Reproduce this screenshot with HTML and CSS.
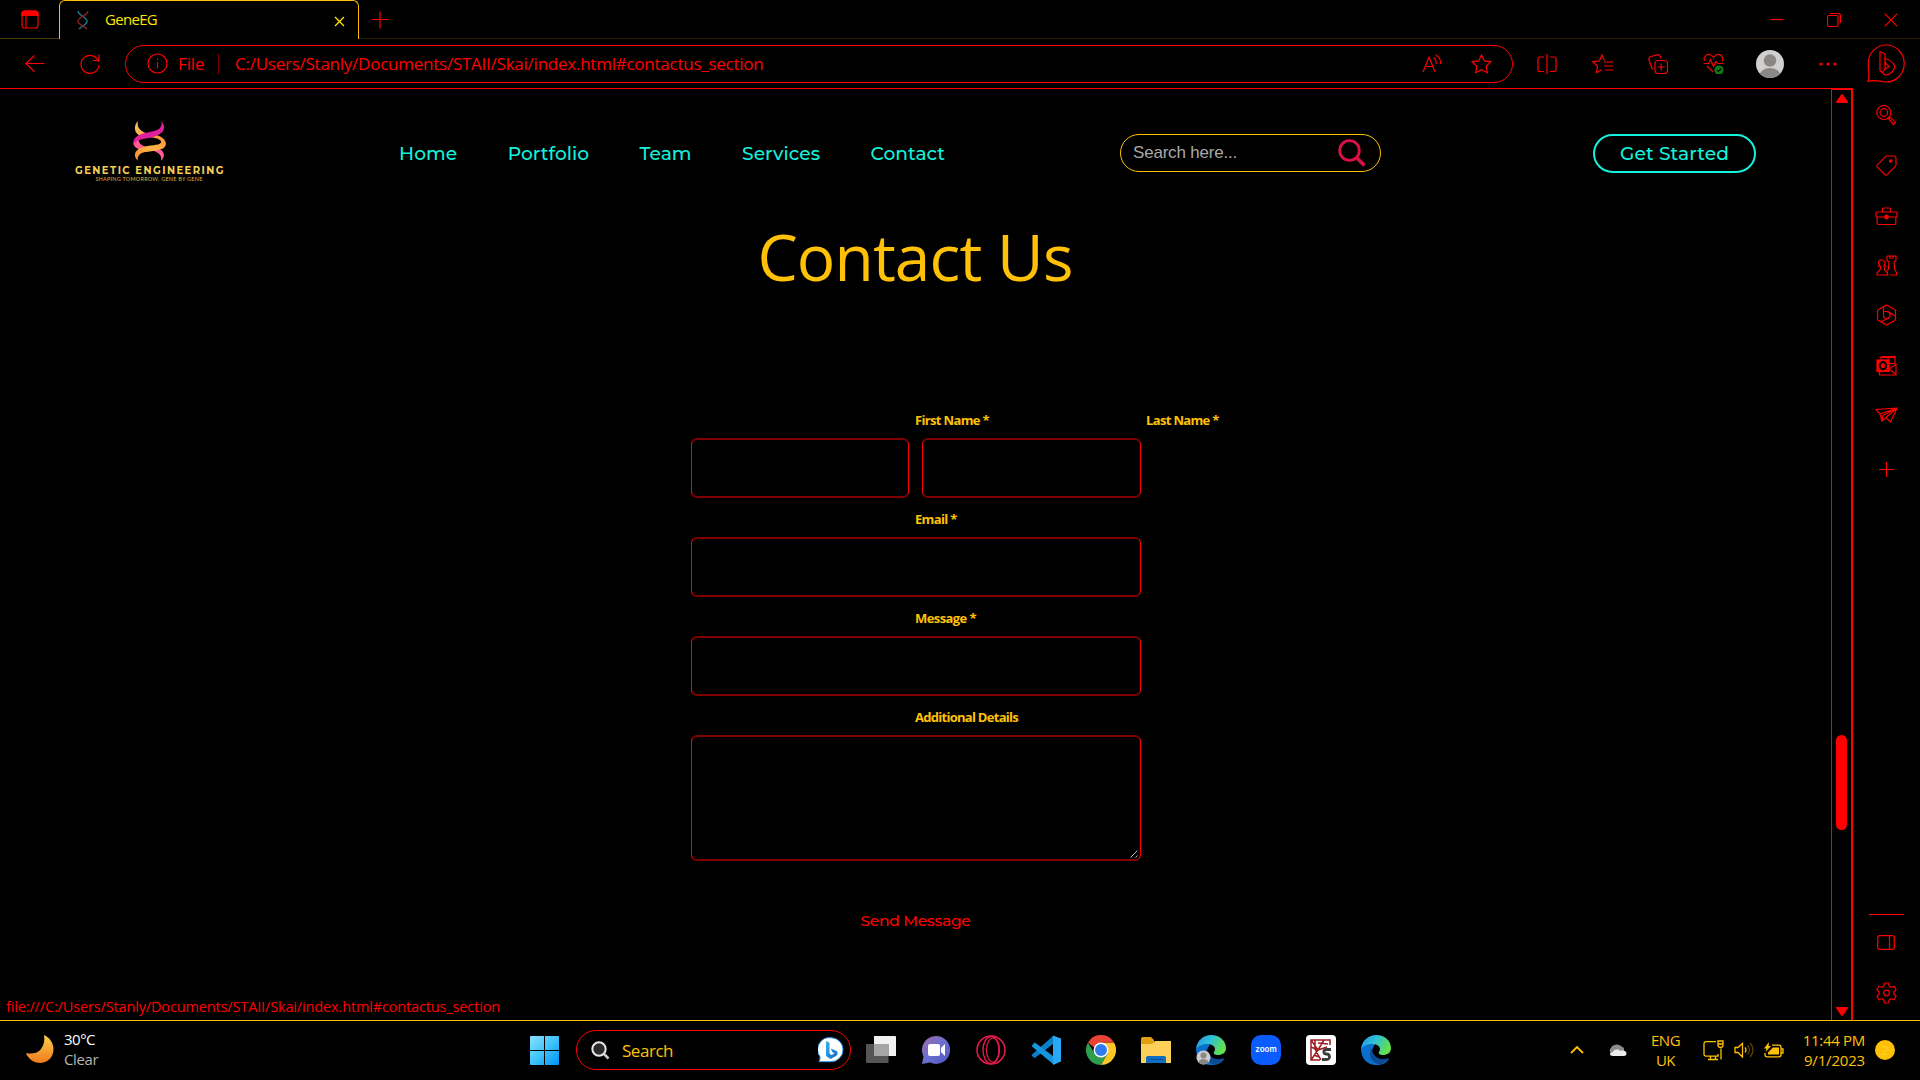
FILE: index.html
```html
<!DOCTYPE html>
<html lang="en">
<head>
<meta charset="utf-8">
<title>GeneEG</title>
<link rel="stylesheet" href="styles.css">
</head>
<body>
<header class="tabstrip">
  <div class="strip-left">
    <svg class="line" width="18" height="20" viewBox="0 0 18 20"><rect x="1" y="1" width="16" height="17" rx="2.5"/><path d="M1 5V3.500A2.500 2.500 0 0 1 3.500 1h11A2.500 2.500 0 0 1 17 3.500V5.500H1z" fill="#f00"/><path d="M5 5v13"/></svg>
  </div>
  <div class="tab">
    <svg class="favicon" width="12" height="20" viewBox="0 0 12 20"><path d="M1 1C2 6 10 7 10 11s-4 4-8 8" stroke="#1b7f8c"/><path d="M11 1C10 6 1 7 1 11s5 4 9 8" stroke="#8c2020"/></svg>
    <span class="tab-title">GeneEG</span>
    <svg class="tab-close" width="11" height="11" viewBox="0 0 11 11"><path d="M1 1l9 9M10 1l-9 9"/></svg>
  </div>
  <div class="strip-right">
    <svg class="line" width="18" height="18" viewBox="0 0 18 18"><path d="M9 .5v17M.5 8.500h17"/></svg>
    <div class="window-buttons">
      <svg class="line" width="14" height="14" viewBox="0 0 14 14"><path d="M.5 6.500h13"/></svg>
      <svg class="line" width="14" height="14" viewBox="0 0 14 14"><rect x=".5" y="2.500" width="10.500" height="11" rx="1.500"/><path d="M3 .5h8a2.500 2.500 0 0 1 2.500 2.500v7"/></svg>
      <svg class="line" width="14" height="14" viewBox="0 0 14 14"><path d="M.7 .7l12.600 12.600M13.300 .7L.7 13.300"/></svg>
    </div>
  </div>
</header>

<div class="toolbar">
  <svg class="line" width="20" height="18" viewBox="0 0 20 18"><path d="M19.500 8.500H1M9.500 .5L1 8.500l8.500 8.200"/></svg>
  <svg class="line reload" width="20" height="20" viewBox="0 0 20 20"><path d="M18.700 8A9 9 0 1 0 19 11M19 .5v6h-6"/></svg>
  <div class="address">
    <svg class="line" width="21" height="21" viewBox="0 0 21 21"><circle cx="10.500" cy="10.500" r="9.500"/><path d="M10.500 9v6.500M10.500 5.500v1.500"/></svg>
    <span class="scheme">File</span>
    <i class="divider"></i>
    <span class="url">C:/Users/Stanly/Documents/STAII/Skai/index.html#contactus_section</span>
    <svg class="line read" width="20" height="19" viewBox="0 0 20 19"><path d="M1 18L7 3l6 15M3.200 12.500h7.600M11.500 3.500c2 1.500 3 4 2.800 6.500M13.500 .8c3.500 2 5.500 5 5.200 9.200"/></svg>
    <svg class="line fav" width="21" height="20" viewBox="0 0 21 20"><path d="M10.500 1l2.900 5.900 6.400.9-4.600 4.500 1.100 6.400-5.800-3-5.800 3 1.100-6.400L1.200 7.800l6.400-.9z"/></svg>
  </div>
  <div class="actions">
    <svg class="line" width="20" height="20" viewBox="0 0 20 20"><path d="M10 0v20M7 3H3a2 2 0 0 0-2 2v10.500a2 2 0 0 0 2 2h4M13 3h4a2 2 0 0 1 2 2v10.500a2 2 0 0 1-2 2h-4"/></svg>
    <svg class="line" width="21" height="20" viewBox="0 0 21 20"><path d="M12.500 6.500L10 1 7.300 6.900l-6.300.9 4.500 4.500-1.100 6.400 5.600-3M12 8h9M12 12h9M13 16h8"/></svg>
    <svg class="line" width="20" height="20" viewBox="0 0 20 20"><rect x="7" y="6.500" width="12.500" height="13" rx="3"/><path d="M13.200 9.500v7M9.800 13h7M4.500 15.500L1 6a3 3 0 0 1 1.800-3.500L9 .8a3 3 0 0 1 3.500 2l.5 1.500"/></svg>
    <svg class="line" width="21" height="21" viewBox="0 0 21 21"><path d="M.5 10.500h5l2-4 3 7 2.500-5 1.500 2H20M1.500 8C0 4 3.500 1 6.500 1.500c2 .3 3 1.500 4 3 1-1.500 2-2.700 4-3C18 1 21 4.500 19 8.500M4 13l6 6"/><circle cx="16" cy="17" r="4" fill="#107c10" stroke="#107c10"/><path d="M14 17l1.500 1.500L18.200 15.500" stroke="#000"/></svg>
    <svg width="28" height="28" viewBox="0 0 28 28"><clipPath id="av"><circle cx="14" cy="14" r="14"/></clipPath><g clip-path="url(#av)"><path fill="#d2d0ce" d="M0 0h28v28H0z"/><circle cx="14" cy="10.500" r="6.200" fill="#8a8886"/><ellipse cx="14" cy="26" rx="10.500" ry="8" fill="#8a8886"/></g></svg>
    <svg width="18" height="4" viewBox="0 0 18 4" fill="#f00"><circle cx="2" cy="2" r="1.600"/><circle cx="9" cy="2" r="1.600"/><circle cx="16" cy="2" r="1.600"/></svg>
    <svg class="line" width="38" height="39" viewBox="0 0 38 39"><path d="M1 37.500C3 32 1.200 28 1.200 19.500A18 18.500 0 1 1 19 38c-7 0-9-3-18-.5z"/><path d="M13 7.500l5 2.500v15l-2.500 3.500-2.500-2zM13 26.500l5 4.500c5 0 9.500-4 9.800-8.500-1-4-4.800-6.500-10-8 0 4 1.500 6.500 4.500 8L18 25" stroke-linejoin="round"/></svg>
  </div>
</div>

<div class="browser-body">
  <main class="viewport">
    <nav class="site-nav">
      <div class="logo">
        <svg width="33" height="40" viewBox="190 28 98 120"><defs><linearGradient id="gold" x1="0" y1="0" x2="1" y2="1"><stop offset="0" stop-color="#f7c95a"/><stop offset="1" stop-color="#ff9a35"/></linearGradient><linearGradient id="amber" x1="1" y1="0" x2="0" y2="1"><stop offset="0" stop-color="#ff9030"/><stop offset=".5" stop-color="#fbb54a"/><stop offset="1" stop-color="#ff8a2b"/></linearGradient></defs>
        <path fill="url(#gold)" d="M204 28C190 44 192 66 216 76L240 67C216 62 200 52 204 28z"/>
        <path fill="#ff5c93" d="M191 92C190 108 206 114 222 118L246 108C224 106 206 100 206 82z"/>
        <path fill="#ff5c93" d="M246 116L266 111C286 118 286 136 274 147C276 130 266 122 246 116z"/>
        <path fill="url(#amber)" d="M238 77L262 71C284 78 291 92 287 102C280 117 250 117 226 121C208 125 202 134 204 147C188 132 194 112 224 105C250 99 273 101 274 91C274 84 258 78 238 77z"/>
        <path fill="#e01f9e" d="M274 28C280 50 262 57 240 61C208 67 187 76 191 100C195 87 210 83 236 79C264 74 300 58 274 28z"/></svg>
        <span class="logo-name">GENETIC ENGINEERING</span>
        <span class="logo-tag">SHAPING TOMORROW, GENE BY GENE</span>
      </div>
      <ul class="menu">
        <li>Home</li><li>Portfolio</li><li>Team</li><li>Services</li><li>Contact</li>
      </ul>
      <div class="search"><span>Search here...</span>
        <svg width="28" height="28" viewBox="0 0 28 28" fill="none" stroke="#dc1047"><circle cx="11.500" cy="11.500" r="9.800" stroke-width="2.800"/><path d="M18 18l8.500 8.500" stroke-width="3.600"/></svg>
      </div>
      <div class="cta">Get Started</div>
    </nav>
    <h1>Contact Us</h1>
    <form class="form">
      <div class="row">
        <div class="field first"><label>First Name *</label><div class="input"></div></div>
        <div class="field last"><label>Last Name *</label><div class="input"></div></div>
      </div>
      <div class="field"><label>Email *</label><div class="input"></div></div>
      <div class="field"><label class="message">Message *</label><div class="input"></div></div>
      <div class="field"><label class="details">Additional Details</label>
        <div class="input area"><svg width="8" height="8" viewBox="0 0 8 8" stroke="#bbb" fill="none"><path d="M.5 7.500l7-7M5.500 7.500l2-2"/></svg></div></div>
      <div class="send">Send Message</div>
    </form>
    <div class="status">file:///C:/Users/Stanly/Documents/STAII/Skai/index.html#contactus_section</div>
  </main>
  <div class="scrollbar">
    <svg width="12" height="9" viewBox="0 0 12 9"><path d="M6 1l5 7H1z" fill="#f00" stroke="#f00" stroke-linejoin="round" stroke-width="2"/></svg>
    <div class="thumb"></div>
    <svg class="down" width="12" height="9" viewBox="0 0 12 9"><path d="M6 8L1 1h10z" fill="#f00" stroke="#f00" stroke-linejoin="round" stroke-width="2"/></svg>
  </div>
  <aside class="sidebar">
    <div class="cell"><svg class="line" width="20" height="20" viewBox="0 0 20 20"><circle cx="7.800" cy="7.500" r="7"/><circle cx="7.800" cy="7.500" r="3.800"/><path d="M12.500 13.500l1.500-1.500 5.500 5.500-2 2.200z"/></svg></div>
    <div class="cell"><svg class="line" width="21" height="21" viewBox="0 0 21 21"><path d="M11 1h7a2 2 0 0 1 2 2v7a2 2 0 0 1-.6 1.400l-8 8a2 2 0 0 1-2.800 0l-7-7a2 2 0 0 1 0-2.800l8-8A2 2 0 0 1 11 1z"/><circle cx="14.800" cy="6" r="1.200" fill="#f00"/></svg></div>
    <div class="cell case"><svg class="line" width="23" height="18" viewBox="0 0 23 18"><rect x="1" y="5" width="21" height="5" rx="1"/><path d="M2.200 10v6a1.500 1.500 0 0 0 1.500 1.500h15.600a1.500 1.500 0 0 0 1.500-1.500v-6M7.500 5V2.500a1.500 1.500 0 0 1 1.500-1.500h5a1.500 1.500 0 0 1 1.500 1.500V5"/><circle cx="11.500" cy="10" r="1.800" fill="#f00"/></svg></div>
    <div class="cell"><svg class="line" width="21" height="21" viewBox="0 0 21 21"><path d="M1 20v-2l3-3 .8-4H2.500l1-1.500C1 7 4 4.500 6 5s4 2.500 2.500 4.500L9.500 11H8l.8 4L11.500 18v2zM11 1h9v4.500l-2 1.500.5 7 2 3.500V20h-7M11 1v4.500l2 1.500-.5 7-1.500 2M14 1v3M17 1v3"/></svg></div>
    <div class="cell"><svg class="line" width="21" height="22" viewBox="0 0 21 22"><path d="M10.500 1l8 4.500a2 2 0 0 1 1 2v7.500a2 2 0 0 1-1 1.500l-8 4.500-8-4.500a2 2 0 0 1-1-1.500V7.500a2 2 0 0 1 1-2zM7.500 3v9M19.500 12l-8-4.500H7.500M5 18l8-4.500M7.500 11a3.300 3.300 0 1 0 6.500 0 3.300 3.300 0 0 0-3-3.300"/></svg></div>
    <div class="cell"><svg class="line" width="21" height="21" viewBox="0 0 21 21"><rect x="1" y="5" width="12" height="11.500" fill="#f00"/><ellipse cx="7" cy="10.700" rx="3.200" ry="3.600" stroke="#000" stroke-width="2"/><path d="M5 4.500V1.500h14v8M12 1.500v3M13 8.500h6M3.500 17v3h16.500V9.500l-7 4.500M13 14l7 5"/><path d="M5 2h14" stroke-width="2"/></svg></div>
    <div class="cell"><svg class="line" width="23" height="16" viewBox="0 0 23 16"><path d="M1 2.500L22 1l-6.500 14L11 10.500 7 14 5 7zM5 7L22 1 11 10.500M7 14l.8-5.500L22 1" stroke-linejoin="round"/></svg></div>
    <div class="cell add"><svg class="line" width="15" height="15" viewBox="0 0 15 15"><path d="M7.500 0v15M0 7.500h15"/></svg></div>
    <hr>
    <div class="cell panel"><svg class="line" width="18" height="15" viewBox="0 0 18 15"><rect x=".7" y=".7" width="16.600" height="13.600" rx="2"/><path d="M12.500 1v13"/></svg></div>
    <div class="cell"><svg class="line" width="21" height="22" viewBox="0 0 21 22"><path d="M8.500 1h4l.6 3 2 1.200 3-1 2 3.500L17.900 10v2l2.200 2.200-2 3.600-3-1-2 1.200-.6 3h-4l-.6-3-2-1.200-3 1-2-3.600L3.100 12v-2L.9 7.700l2-3.500 3 1 2-1.200z" stroke-linejoin="round"/><circle cx="10.500" cy="11" r="2.800"/></svg></div>
  </aside>
</div>

<footer class="taskbar">
  <div class="weather">
    <svg width="28" height="29" viewBox="0 0 28 29"><defs><linearGradient id="mo" x1="0" y1="0" x2="0" y2="1"><stop offset="0" stop-color="#fbd04a"/><stop offset="1" stop-color="#f0791e"/></linearGradient></defs><path fill="url(#mo)" d="M18 0c5 2 10 8 9.500 15C27 23 21 28 14 28 8 28 2 24 0 18c6 1.500 12 0 15-4s4-9 3-14z"/></svg>
    <div><span class="temp">30°C</span><br><span class="cond">Clear</span></div>
  </div>
  <div class="apps">
    <svg width="29" height="29" viewBox="0 0 29 29"><defs><linearGradient id="w" x1="0" y1="0" x2="1" y2="1"><stop offset="0" stop-color="#8be0ff"/><stop offset=".5" stop-color="#3fc4fb"/><stop offset="1" stop-color="#0090f4"/></linearGradient></defs><path fill="url(#w)" d="M1 0h13v14H0V1a1 1 0 0 1 1-1zM15 0h13a1 1 0 0 1 1 1v13H15zM0 15h14v14H1a1 1 0 0 1-1-1zM15 15h14v13a1 1 0 0 1-1 1H15z"/></svg>
    <div class="tasksearch">
      <svg width="19" height="19" viewBox="0 0 19 19"><circle cx="8" cy="8" r="6.700" fill="#2b2b2b" stroke="#e8e8e8" stroke-width="2"/><path d="M13 13l4.500 4.500" stroke="#ccc" stroke-width="2.500"/></svg>
      <span>Search</span>
      <svg class="bing" width="26" height="26" viewBox="0 0 26 26"><defs><linearGradient id="bg" x1="0" y1="0" x2="1" y2="1"><stop offset="0" stop-color="#35b5f0"/><stop offset="1" stop-color="#1464c8"/></linearGradient></defs><path fill="#fff" stroke="#2a8de8" d="M13 .7a12 12 0 1 1 0 24H1c1-2 1-3 1-5A12 12 0 0 1 13 .7z"/><path fill="url(#bg)" d="M8 4l3.500 1.500v11L13.500 18l3-1.800-2.500-1.200-1-3.500 5.500 2.500c1.800 1.500 1.200 4-.5 5L12.500 22 8 19z"/></svg>
    </div>
    <svg width="30" height="28" viewBox="0 0 30 28"><path fill="#f2f2f2" d="M8 0h21a1 1 0 0 1 1 1v19H8z"/><path fill="#555" d="M0 8h22.500v19H1a1 1 0 0 1-1-1z"/><path fill="#a5a5a5" d="M8 8h14.500v12H8z"/></svg>
    <svg width="30" height="30" viewBox="0 0 30 30"><defs><linearGradient id="ch" x1="0" y1="0" x2="1" y2="1"><stop offset="0" stop-color="#a06aa8"/><stop offset=".5" stop-color="#6a6fd0"/><stop offset="1" stop-color="#4f52c0"/></linearGradient></defs><path fill="url(#ch)" d="M15 1a14 14 0 1 1-6 26.600L1 29l1.500-7.500A14 14 0 0 1 15 1z"/><rect x="7" y="9" width="12" height="12" rx="2" fill="#fff"/><path fill="#fff" d="M20 13l4-4v12l-4-4z"/></svg>
    <svg width="30" height="30" viewBox="0 0 30 30" fill="none" stroke="#e8194b"><circle cx="15" cy="15" r="14" stroke-width="1.500"/><ellipse cx="15" cy="15" rx="8" ry="13.500" stroke-width="1.400"/><ellipse cx="17" cy="15" rx="6.500" ry="12" stroke-width="1.200"/></svg>
    <svg width="30" height="30" viewBox="0 0 30 30"><path fill="#0a7fc9" d="M1 19.500L22 1v8L4.500 22.500a1 1 0 0 1-1.500 0L1 21z"/><path fill="#1595dd" d="M1 10.500L3 8a1 1 0 0 1 1.500 0L22 21v8L1 11.500z"/><path fill="#29a9f3" d="M22 .5l8 3v23l-8 3.500z"/></svg>
    <svg width="30" height="30" viewBox="0 0 30 30"><path fill="#2e9e4c" d="M2 7.500A15 15 0 0 0 15 30l6.500-11.200L15 22l-6.500-3.500z"/><path fill="#fcc629" d="M28 7.500A15 15 0 0 1 15 30l6.500-11.300 0-7L15 7.500z"/><path fill="#e84335" d="M2 7.500A15 15 0 0 1 28 7.500H15l-7 5z"/><circle cx="15" cy="15" r="7.500" fill="#fff"/><circle cx="15" cy="15" r="6" fill="#2f7cf0"/></svg>
    <svg width="30" height="30" viewBox="0 0 30 30"><path fill="#e0a010" d="M0 4a2 2 0 0 1 2-2h8l3 3v6H0z"/><path fill="#fdd05a" d="M0 9h11l3-3h16v22H0z"/><path fill="#0d6fc4" d="M5 28v-5a2 2 0 0 1 2-2h16a2 2 0 0 1 2 2v5z"/><path stroke="#0a4f95" d="M9 24.500h13"/></svg>
    <svg width="30" height="30" viewBox="0 0 30 30"><defs><linearGradient id="e1" x1="0" y1="0" x2="1" y2=".4"><stop offset="0" stop-color="#2494e8"/><stop offset=".5" stop-color="#2fc0d8"/><stop offset="1" stop-color="#62e04e"/></linearGradient></defs><g id="edge"><path fill="#0a6fcb" d="M0 14C2 8 9 7 14 9l-3 6c0 7 5 12 12 10l5-1c-3 5-8 6-13 6C6 30 0 23 0 14z"/><path fill="#0c4a96" d="M11 13c-5 7 0 15 8 16.500 4-1 7-3 9-6.500-7 3-17 0-17-10z"/><path fill="url(#e1)" d="M0 14C1 5 8 0 15 0c9 0 15 6 15 13 0 5-4 7-8 7-3 0-5-1-4-3 3-4-1-8-6-8C6 9 2 11 0 14z"/></g><circle cx="7.500" cy="22.500" r="7" fill="#ccc"/><circle cx="7.500" cy="20.500" r="3" fill="#8a8886"/><path fill="#8a8886" d="M2.500 27.500a5 3.500 0 0 1 10 0 7 7 0 0 1-10 0z"/></svg>
    <div class="zoomapp">zoom</div>
    <div class="ksapp"><svg width="30" height="30" viewBox="0 0 30 30" fill="none" stroke="#a01c20" stroke-width="1.500"><path d="M14 25H5V5h19v5M5 12l7 3 6-10M12 15L5 25M12 15l9-3M5 5l7 10M9 5v9l6 11M8 20l5 2M12 8l10 1"/><path stroke="#3c3c3c" stroke-width="2.800" d="M25 14.500h-4.500c-3.500 0-3.500 4.500 0 4.500s4.500 5.500 0 5.500H16"/></svg></div>
    <svg width="30" height="30" viewBox="0 0 30 30"><use href="#edge"/></svg>
  </div>
  <div class="tray">
    <svg class="ty" width="14" height="8" viewBox="0 0 14 8"><path d="M1 7l6-6 6 6" stroke-width="1.800"/></svg>
    <svg width="19" height="12" viewBox="0 0 19 12"><path fill="#8c8c8c" d="M3 9a3 3 0 0 1 0-5A6 5 0 0 1 13 2l3 2v5z"/><path fill="#ececec" d="M5 12C1 12 1 8 5 8c1-3 6-3 7-1 4-1 6 0 6.500 2 0 2-1 3-2.500 3z"/></svg>
    <div class="lang">ENG<br>UK</div>
    <svg class="ty" width="21" height="21" viewBox="0 0 21 21"><path d="M13 1.700H3a2 2 0 0 0-2 2v10.500a2 2 0 0 0 2 2h12V14M5 19.500h10M7.500 16v3M12.500 16v3M18 8.500v11"/><path d="M15 1h5v4a2.500 2.500 0 0 1-5 0zM15 4h5"/></svg>
    <svg class="ty spk" width="20" height="16" viewBox="0 0 20 16"><path d="M1 5.500v5h3L8.500 15V1.500L4 5.500zM11 5.500q2 2.500 0 5"/><path d="M13.500 3.500q4 4.500 0 9M16 1q6 7 0 14" opacity=".35"/></svg>
    <svg class="ty bat" width="20" height="16" viewBox="0 0 20 16"><path d="M8 3.200h7a2 2 0 0 1 2 2v7.600a2 2 0 0 1-2 2H3a2 2 0 0 1-2-2V11M17.500 7h1.500v4h-1.500"/><path fill="#ffc107" stroke="none" d="M9 5.500h6v7H4V10.500zM5 0L0 6.500h2.500L1.500 10 7 4H4.500z"/></svg>
    <div class="clock"><span class="time">11:44 PM</span><br><span class="date">9/1/2023</span></div>
    <div class="badge">2</div>
  </div>
</footer>
</body>
</html>
```
FILE: styles.css
```css
* { box-sizing: border-box; }
body { margin: 0; width: 1920px; height: 1080px; overflow: hidden; background: #000; color: #ffc107; font-family: "Open Sans", "Noto Sans", sans-serif; display: flex; flex-direction: column; }
svg { display: block; flex: none; }
span, label, li { white-space: nowrap; }
.line { fill: none; stroke: #f00; stroke-width: 1.2; }

.tabstrip { height: 39px; display: flex; }
.strip-left { width: 59px; border-bottom: 1px solid #4a3500; padding: 10px 0 0 21px; }
.tab { width: 300px; border: 1px solid #ffc107; border-bottom: 0; border-radius: 6px 6px 0 0; display: flex; align-items: center; padding: 0 13px 0 17px; }
.favicon { fill: none; stroke-width: 1.3; }
.tab-title { margin-left: 16px; font-size: 15px; line-height: 20px; letter-spacing: -.7px; color: #ffe600; padding-bottom: 2px; }
.tab-close { margin-left: auto; stroke: #ffe600; stroke-width: 1.3; margin-top: 2px; }
.strip-right { flex: 1; border-bottom: 1px solid #2e2100; display: flex; justify-content: space-between; padding: 11px 22px 0 12px; }
.window-buttons { display: flex; gap: 43px; padding-top: 2px; }

.toolbar { height: 49px; display: flex; align-items: center; padding-left: 25px; font-size: 17px; color: #f00; }
.reload { margin-left: 35px; }
.address { margin-left: 25px; width: 1388px; height: 38px; border: 1px solid #f00; border-radius: 19px; display: flex; align-items: center; padding-left: 21px; }
.scheme { margin-left: 10px; width: 26px; letter-spacing: -.1px; }
.divider { width: 1px; height: 20px; background: #800000; margin: 0 16px 0 14px; }
.url { width: 528px; letter-spacing: -.245px; }
.read { margin-left: 659px; }
.fav { margin-left: 29px; }
.actions { margin-left: 5px; display: grid; grid-template-columns: 57px 55px 55px 56px 58px 57px 60px; justify-items: center; align-items: center; }

.browser-body { flex: 1; display: flex; min-height: 0; }
.viewport { position: relative; width: 1831px; border-top: 1px solid #f00; }
.site-nav { height: 128px; display: flex; align-items: flex-start; font-family: Montserrat, Inter, sans-serif; font-weight: 500; }
.logo { width: 146px; margin: 32px 0 0 76px; display: flex; flex-direction: column; align-items: center; color: #f3cf55; }
.logo-name { font: 700 10px/12px Montserrat, Lato, sans-serif; letter-spacing: 1.45px; margin: 4px -2px 0 0; }
.logo-tag { font: 400 5.500px/8px Lato, sans-serif; letter-spacing: .24px; opacity: .85; margin-top: -2px; }
.menu { list-style: none; margin: 0 0 0 177px; padding: 46px 0 0; display: flex; gap: 50.500px; font-size: 18.600px; line-height: 38px; letter-spacing: .05px; color: #13f2dd; }
.search { margin: 45px 0 0 auto; width: 261px; height: 38px; border: 1px solid #ffc107; border-radius: 19px; display: flex; align-items: center; justify-content: space-between; padding: 0 14px 0 12px; font: 400 17px/36px "Liberation Sans", sans-serif; letter-spacing: -.2px; color: #a9a9a9; }
.cta { margin: 45px 75px 0 212px; width: 163px; height: 39px; border: 2px solid #13f2dd; border-radius: 20px; color: #13f2dd; font-size: 18.600px; letter-spacing: .1px; line-height: 35px; text-align: center; }
h1 { margin: 0 1px 0 0; font-size: 64px; font-weight: 400; line-height: 80px; letter-spacing: -.85px; text-align: center; }
.form { width: 450px; margin: 113px 0 0 691px; }
.row { display: flex; gap: 13px; }
.first { width: 218px; }
.last { width: 219px; }
.field { margin-bottom: 11px; }
.field label { display: block; height: 28px; line-height: 20px; font-size: 13px; font-weight: 700; letter-spacing: -.66px; padding-left: 224px; }
.field label.message { letter-spacing: -.58px; }
.field label.details { letter-spacing: -.72px; }
.input { height: 60px; border: solid; border-width: 2px 1px; border-color: #800000 #f00; border-radius: 6px; }
.area { height: 126px; display: flex; align-items: flex-end; justify-content: flex-end; padding: 0 2px 1px; }
.send { margin: 50px 1px 0 0; text-align: center; color: #f00; font: 500 15.500px/20px Montserrat, Inter, sans-serif; letter-spacing: -.3px; }
.status { position: absolute; left: 6px; bottom: 3px; color: #f00; font-size: 14.500px; line-height: 20px; letter-spacing: -.144px; }

.scrollbar { width: 22px; border: solid #f00; border-width: 2px 2px 0 1px; display: flex; flex-direction: column; padding: 4px 0 4px 4px; }
.thumb { width: 11px; height: 95px; border-radius: 6px; background: #f00; margin-top: 632px; }
.down { margin-top: auto; }
.sidebar { width: 67px; display: flex; flex-direction: column; padding: 2px 0; }
.cell { height: 50px; display: flex; align-items: center; justify-content: center; padding-right: 1px; }
.cell.case { padding-top: 2px; }
.cell.panel { padding-bottom: 2px; }
.cell.add { height: 58px; }
.sidebar hr { width: 35px; height: 1px; border: 0; background: #f00; margin: auto auto 3px; }

.taskbar { height: 60px; border-top: 1px solid #ffc107; display: flex; font-size: 15px; line-height: 20px; }
.weather { width: 530px; display: flex; padding: 8px 0 0 26px; gap: 10px; }
.weather svg { margin-top: 6px; }
.temp { color: #fff; letter-spacing: -.5px; }
.cond { color: #b5b5b5; letter-spacing: -.4px; }
.apps { height: 58px; display: flex; align-items: center; gap: 25px; }
.tasksearch { width: 275px; height: 40px; margin: 0 -10px 0 -8px; border: 1px solid #f00; border-radius: 20px; display: flex; align-items: center; padding: 0 6px 0 14px; font-size: 17px; }
.tasksearch span { margin-left: 12px; letter-spacing: -.47px; padding-top: 1px; }
.bing { margin-left: auto; }
.zoomapp { width: 30px; height: 30px; border-radius: 10px; background: #0b5cff; color: #fff; font: 600 8px/28px Inter, sans-serif; text-align: center; }
.ksapp { width: 30px; height: 30px; border-radius: 4px; background: #fff; }
.tray { margin-left: auto; display: flex; align-items: center; height: 58px; padding-right: 25px; }
.ty { fill: none; stroke: #ffc107; stroke-width: 1.300; }
.tray svg + svg { margin-left: 24px; }
.tray .spk, .tray .bat { margin-left: 10px; }
.lang { width: 29px; margin: 0 23px 0 24px; text-align: center; letter-spacing: -.5px; }
.clock { margin-left: 18px; width: 63px; text-align: right; white-space: nowrap; }
.time { letter-spacing: -.3px; }
.date { letter-spacing: -.18px; }
.badge { width: 20px; height: 20px; margin-left: 10px; border-radius: 50%; background: #ffc107; color: #ffd21f; text-align: center; font-size: 13px; }
```
